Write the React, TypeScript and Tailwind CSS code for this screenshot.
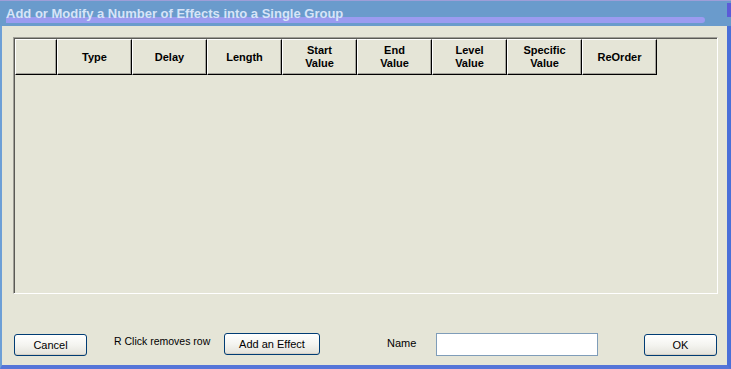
import React from "react";

const columns: { key: string; lines: string[]; width: string }[] = [
  { key: "blank", lines: [""], width: "w-[42px]" },
  { key: "type", lines: ["Type"], width: "w-[75px]" },
  { key: "delay", lines: ["Delay"], width: "w-[75px]" },
  { key: "length", lines: ["Length"], width: "w-[75px]" },
  { key: "start", lines: ["Start", "Value"], width: "w-[75px]" },
  { key: "end", lines: ["End", "Value"], width: "w-[75px]" },
  { key: "level", lines: ["Level", "Value"], width: "w-[75px]" },
  { key: "specific", lines: ["Specific", "Value"], width: "w-[75px]" },
  { key: "reorder", lines: ["ReOrder"], width: "w-[75px]" },
];

function XpButton({ label, width }: { label: string; width: string }) {
  return (
    <button
      className={`${width} h-[22px] rounded-[3px] border border-[#003c74] bg-gradient-to-b from-[#ffffff] via-[#f4f4f0] to-[#e3e2da] text-[11px] text-black shadow-[inset_0_-1px_0_#d6d0c5]`}
    >
      {label}
    </button>
  );
}

export default function App() {
  return (
    <div
      className="w-[731px] h-[369px] flex flex-col bg-[#6a9bcc] overflow-hidden"
      style={{ fontFamily: '"Liberation Sans", Arial, sans-serif' }}
    >
      {/* Title bar */}
      <div className="relative h-[26px] shrink-0 border-t border-[#9e9ed8] bg-[#6a9bcc]">
        <div className="absolute left-[6px] top-[16px] h-[6px] w-[699px] rounded-r-[3px] bg-[#9b9bf0]" />
        <div className="absolute right-0 top-[2px] h-[14px] w-[4px] bg-[#5b5bd8]" />
        <span className="relative pl-[6px] pt-[6px] block text-[13px] font-bold text-[#d6e4f8] leading-[14px]">
          Add or Modify a Number of Effects into a Single Group
        </span>
      </div>

      {/* Body */}
      <div className="flex-1 flex flex-col border-l-2 border-l-[#6d9fd6] border-r-4 border-r-[#4a6fd8] border-b-4 border-b-[#5575d8] bg-[#e5e5d7]">
        {/* Grid panel */}
        <div className="ml-[11px] mt-[11px] w-[705px] h-[257px] border border-t-[#a09f97] border-l-[#a09f97] border-b-white border-r-white shadow-[inset_1px_1px_0_#5a5a55]">
          <div className="flex ml-[1px] mt-[1px]">
            {columns.map((col) => (
              <div
                key={col.key}
                className={`${col.width} h-[36px] flex flex-col items-center justify-center border-t border-l border-t-white border-l-white border-b border-r border-b-black border-r-black shadow-[inset_-1px_-1px_0_#a5a49c] text-[11px] font-bold leading-[13px] text-black`}
              >
                {col.lines.map((line, i) => (
                  <span key={i}>{line}</span>
                ))}
              </div>
            ))}
          </div>
        </div>

        {/* Bottom controls */}
        <div className="flex items-center mt-[39px] h-[22px]">
          <div className="ml-[12px]">
            <XpButton label="Cancel" width="w-[73px]" />
          </div>
          <span className="ml-[27px] w-[110px] pb-[4px] text-[10.5px] text-black">
            R Click removes row
          </span>
          <XpButton label="Add an Effect" width="w-[96px]" />
          <span className="ml-[67px] w-[49px] pb-[2px] text-[11px] text-black">
            Name
          </span>
          <input
            className="w-[162px] h-[23px] border border-[#7f9db9] bg-white outline-none text-[11px] px-1"
            defaultValue=""
          />
          <div className="ml-[46px]">
            <XpButton label="OK" width="w-[73px]" />
          </div>
        </div>
      </div>
    </div>
  );
}
